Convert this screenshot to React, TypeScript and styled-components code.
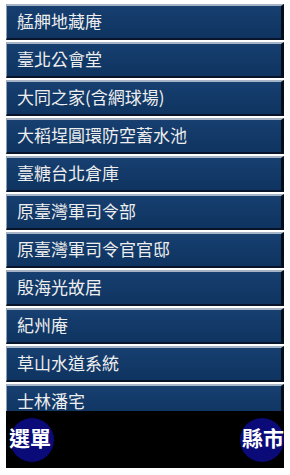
import React from "react";
import styled, { createGlobalStyle } from "styled-components";

const Global = createGlobalStyle`
  html, body { margin: 0; padding: 0; background: #ffffff; }
  body { font-family: "Noto Sans CJK TC", "Noto Sans", sans-serif; }
`;

const Screen = styled.div`
  width: 278px;
  height: 464px;
  margin: 4px 0 0 6px;
  display: flex;
  flex-direction: column;
  overflow: hidden;
`;

const List = styled.div`
  flex: 1;
  min-height: 0;
  overflow: hidden;
  display: flex;
  flex-direction: column;
  gap: 2px;
  background: #ffffff;
`;

const Row = styled.div`
  flex-shrink: 0;
  box-sizing: border-box;
  height: 36px;
  display: flex;
  align-items: center;
  padding: 0 0 4px 10px;
  background: linear-gradient(#173f70, #113866 60%, #0f3461);
  border-top: 2px solid #a7b4c6;
  border-left: 1px solid #8c9db3;
  border-right: 3px solid #050d1a;
  border-bottom: 2px solid #07142a;
  color: #eeeeee;
  font-size: 17px;
  line-height: 1;
  white-space: nowrap;
`;

const Bar = styled.div`
  flex-shrink: 0;
  height: 57px;
  background: #000000;
  display: flex;
  justify-content: space-between;
  align-items: flex-start;
  padding: 7px 0 0 4px;
  box-sizing: border-box;
`;

const RoundButton = styled.div`
  width: 44px;
  height: 44px;
  border-radius: 50%;
  background: #0a0a78;
  display: flex;
  align-items: center;
  justify-content: center;
  color: #ffffff;
  font-weight: 700;
  font-size: 21px;
  white-space: nowrap;
  line-height: 1;
  padding-bottom: 5px;
  box-sizing: border-box;
`;

const Label = styled.span<{ $shift: number }>`
  display: block;
  transform: translateX(${(p) => p.$shift}px);
`;

const items = [
  "艋舺地藏庵",
  "臺北公會堂",
  "大同之家(含網球場)",
  "大稻埕圓環防空蓄水池",
  "臺糖台北倉庫",
  "原臺灣軍司令部",
  "原臺灣軍司令官官邸",
  "殷海光故居",
  "紀州庵",
  "草山水道系統",
  "士林潘宅",
];

export default function App() {
  return (
    <>
      <Global />
      <Screen>
        <List>
          {items.map((t) => (
            <Row key={t}>{t}</Row>
          ))}
        </List>
        <Bar>
          <RoundButton>
            <Label $shift={-2}>選單</Label>
          </RoundButton>
          <RoundButton>
            <Label $shift={1}>縣市</Label>
          </RoundButton>
        </Bar>
      </Screen>
    </>
  );
}
